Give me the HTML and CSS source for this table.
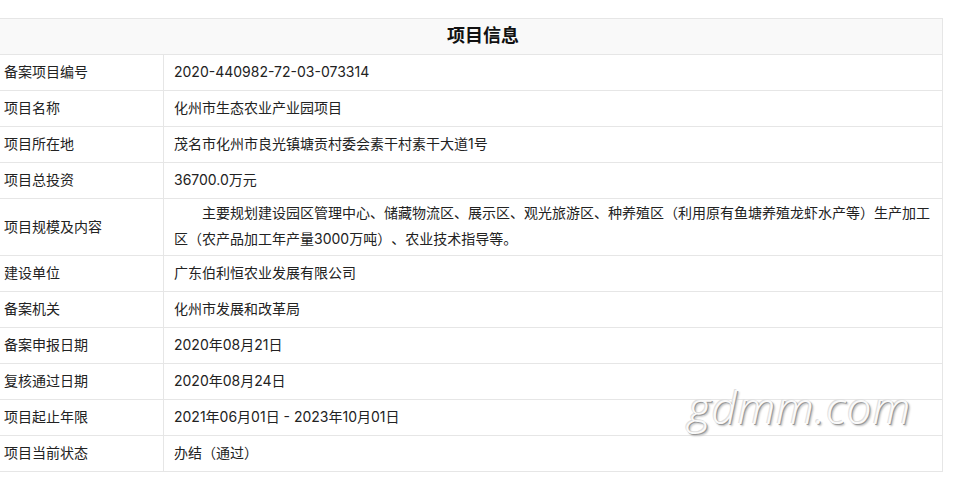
FILE: index.html
```html
<!DOCTYPE html>
<html>
<head>
    <meta charset="utf-8">
    <title>项目信息</title>
    <link rel="stylesheet" href="styles.css">
</head>
<body>
    <table class="info-table">
        <colgroup>
            <col class="label-col">
            <col>
        </colgroup>
        <tr>
            <th colspan="2" class="table-title">项目信息</th>
        </tr>
        <tr><td class="label">备案项目编号</td><td class="value">2020-440982-72-03-073314</td></tr>
        <tr><td class="label">项目名称</td><td class="value">化州市生态农业产业园项目</td></tr>
        <tr><td class="label">项目所在地</td><td class="value">茂名市化州市良光镇塘贡村委会素干村素干大道1号</td></tr>
        <tr><td class="label">项目总投资</td><td class="value">36700.0万元</td></tr>
        <tr class="tall-row">
            <td class="label">项目规模及内容</td>
            <td class="value"><p class="content">主要规划建设园区管理中心、储藏物流区、展示区、观光旅游区、种养殖区（利用原有鱼塘养殖龙虾水产等）生产加工区（农产品加工年产量3000万吨）、农业技术指导等。</p></td>
        </tr>
        <tr><td class="label">建设单位</td><td class="value">广东伯利恒农业发展有限公司</td></tr>
        <tr><td class="label">备案机关</td><td class="value">化州市发展和改革局</td></tr>
        <tr><td class="label">备案申报日期</td><td class="value">2020年08月21日</td></tr>
        <tr><td class="label">复核通过日期</td><td class="value">2020年08月24日</td></tr>
        <tr><td class="label">项目起止年限</td><td class="value">2021年06月01日 - 2023年10月01日</td></tr>
        <tr><td class="label">项目当前状态</td><td class="value">办结（通过）</td></tr>
    </table>
    <span class="watermark">gdmm.com</span>
</body>
</html>
```

FILE: styles.css
```css
body {
    margin: 0;
    background: #fff;
    font-family: Inter, "Noto Sans CJK SC", sans-serif;
    font-size: 14px;
    color: #222;
    text-spacing-trim: space-all;
}
.info-table {
    border-collapse: collapse;
    width: 944px;
    margin: 18px 0 0 -1px;
    table-layout: fixed;
}
.label-col {
    width: 164px;
}
.info-table th,
.info-table td {
    border: 1px solid #e6e6e6;
    height: 33px;
    padding: 0 0 2px 0;
    vertical-align: middle;
    line-height: 20px;
}
.table-title {
    background-color: #f9f9f9;
    font-size: 18px;
    font-weight: bold;
    color: #111;
    text-align: center;
    padding-left: 24px !important;
}
.label {
    padding-left: 4px !important;
    text-align: left;
}
.value {
    padding-left: 10px !important;
}
.info-table .tall-row td {
    height: 56px;
    padding-bottom: 0;
}
.content {
    margin: 0;
    padding: 1px 0 3px;
    line-height: 26px;
    text-indent: 2em;
}
.watermark {
    position: absolute;
    left: 688px;
    top: 377px;
    font-family: "Open Sans", "DejaVu Sans", sans-serif;
    font-size: 44px;
    font-style: italic;
    font-weight: 300;
    color: #fafafa;
    letter-spacing: 1px;
    text-shadow: 1px 1px 0 #999, 2px 2px 2px #bbb, -1px -1px 0 #e0e0e0;
}
```
